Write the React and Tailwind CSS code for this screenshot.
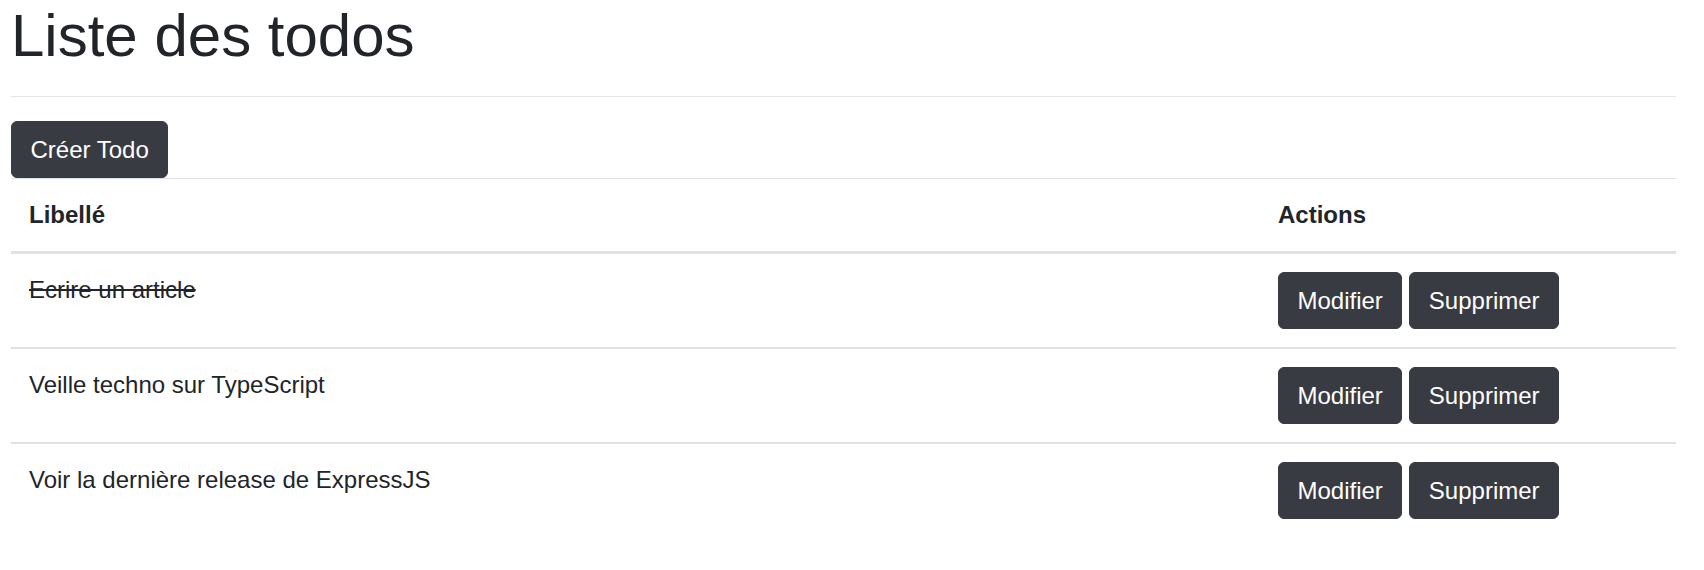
import { useState } from 'react';

const initialTodos = [
  { id: 1, label: 'Ecrire un article', done: true },
  { id: 2, label: 'Veille techno sur TypeScript', done: false },
  { id: 3, label: 'Voir la dernière release de ExpressJS', done: false },
];

function DarkButton({ children, onClick }) {
  return (
    <button
      type="button"
      onClick={onClick}
      className="inline-block rounded-[6px] border border-[#393b43] bg-[#393b43] px-[18.5px] py-[9.5px] text-[24px] leading-[36px] text-white"
    >
      {children}
    </button>
  );
}

export default function App() {
  const [todos, setTodos] = useState(initialTodos);

  return (
    <div
      className="bg-white pl-[11px] pr-[28px] text-[24px] leading-[36px] text-[#212529]"
      style={{ fontFamily: '"Liberation Sans", Arial, sans-serif' }}
    >
      <h1 className="text-[60px] leading-[72px] font-normal">Liste des todos</h1>
      <div className="my-[24px] border-t-[1.5px] border-[#e6e6e6]" />

      <DarkButton>Créer Todo</DarkButton>

      {/* Todo table */}
      <table className="w-full border-collapse">
        <thead>
          <tr>
            <th className="border-t-[1.5px] border-b-[3px] border-[#dee2e6] p-[18px] text-left align-bottom font-bold">
              Libellé
            </th>
            <th className="w-[416px] border-t-[1.5px] border-b-[3px] border-[#dee2e6] p-[18px] text-left align-bottom font-bold">
              Actions
            </th>
          </tr>
        </thead>
        <tbody>
          {todos.map((todo) => (
            <tr key={todo.id}>
              <td className="border-t-2 border-[#dee2e6] p-[18px] align-top">
                <span className={todo.done ? 'line-through' : ''}>{todo.label}</span>
              </td>
              <td className="border-t-2 border-[#dee2e6] p-[18px] align-top">
                <div className="flex gap-[7px]">
                  <DarkButton>Modifier</DarkButton>
                  <DarkButton onClick={() => setTodos((t) => t.filter((x) => x.id !== todo.id))}>
                    Supprimer
                  </DarkButton>
                </div>
              </td>
            </tr>
          ))}
        </tbody>
      </table>
    </div>
  );
}
